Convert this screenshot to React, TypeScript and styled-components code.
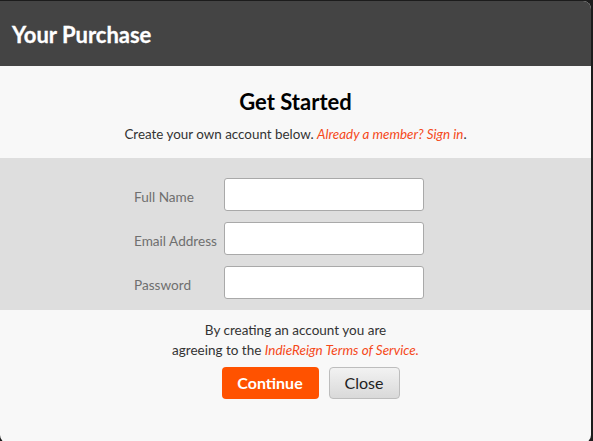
import React from "react";
import styled, { createGlobalStyle } from "styled-components";

const Global = createGlobalStyle`
  html, body { margin: 0; padding: 0; background: #1c1c1c; }
  body { font-family: "Lato", "Open Sans", sans-serif; }
  * { box-sizing: border-box; }
`;

const Page = styled.div`
  width: 593px;
  height: 441px;
  overflow: hidden;
  padding-top: 1px;
`;

const Modal = styled.div`
  width: 591px;
  height: 442px;
  border-radius: 0 8px 8px 8px;
  overflow: hidden;
  background: #f8f8f8;
  display: flex;
  flex-direction: column;
`;

const Header = styled.div`
  height: 65px;
  background: #444444;
  display: flex;
  align-items: center;
  padding-left: 12px;
  padding-top: 2px;
  color: #fff;
  font-weight: 700;
  font-size: 22px;
  letter-spacing: 0;
  -webkit-text-stroke: 0.3px #fff;
`;

const Intro = styled.div`
  display: flex;
  flex-direction: column;
  align-items: center;
  padding-top: 22px;
  height: 92px;
`;

const Title = styled.h1`
  margin: 0;
  font-size: 22px;
  font-weight: 700;
  color: #000;
  line-height: 28px;
`;

const Sub = styled.p`
  margin: 9px 0 0;
  font-size: 13.4px;
  color: #333;
  line-height: 18px;
`;

const Link = styled.a`
  color: #f5491a;
  font-style: italic;
  text-decoration: none;
`;

const Band = styled.div`
  height: 152px;
  background: #dedede;
  padding: 20px 0 0 134px;
  display: flex;
  flex-direction: column;
  gap: 11px;
`;

const Row = styled.div`
  display: flex;
  align-items: center;
`;

const Label = styled.label`
  width: 90px;
  padding-top: 5px;
  font-size: 13.6px;
  color: #6f6f6f;
`;

const Input = styled.input`
  width: 200px;
  height: 33px;
  border: 1px solid #a9a9a9;
  border-radius: 3px;
  background: #fff;
`;

const Footer = styled.div`
  display: flex;
  flex-direction: column;
  align-items: center;
  padding-top: 10px;
`;

const Terms = styled.p`
  margin: 0;
  text-align: center;
  font-size: 13.5px;
  line-height: 20px;
  color: #333;
`;

const Buttons = styled.div`
  display: flex;
  gap: 10px;
  margin-top: 7px;
  margin-left: 30px;
`;

const Button = styled.button<{ $primary?: boolean }>`
  height: 32px;
  border-radius: 4px;
  font-family: "Lato", "Open Sans", sans-serif;
  font-size: 16px;
  line-height: 1;
  cursor: pointer;
  padding: 0;
  ${(p) =>
    p.$primary
      ? `
    width: 97px;
    background: #ff5200;
    border: none;
    color: #fff;
    font-weight: 700;
  `
      : `
    width: 71px;
    background: linear-gradient(#f2f2f2, #d9d9d9);
    border: 1px solid #bdbdbd;
    color: #222;
  `}
`;

export default function App() {
  return (
    <Page>
      <Global />
      <Modal>
        <Header>Your Purchase</Header>
        <Intro>
          <Title>Get Started</Title>
          <Sub>
            Create your own account below. <Link>Already a member? Sign in</Link>.
          </Sub>
        </Intro>
        <Band>
          <Row>
            <Label>Full Name</Label>
            <Input />
          </Row>
          <Row>
            <Label>Email Address</Label>
            <Input />
          </Row>
          <Row>
            <Label>Password</Label>
            <Input type="password" />
          </Row>
        </Band>
        <Footer>
          <Terms>
            By creating an account you are
            <br />
            agreeing to the <Link>IndieReign Terms of Service.</Link>
          </Terms>
          <Buttons>
            <Button $primary>Continue</Button>
            <Button>Close</Button>
          </Buttons>
        </Footer>
      </Modal>
    </Page>
  );
}
